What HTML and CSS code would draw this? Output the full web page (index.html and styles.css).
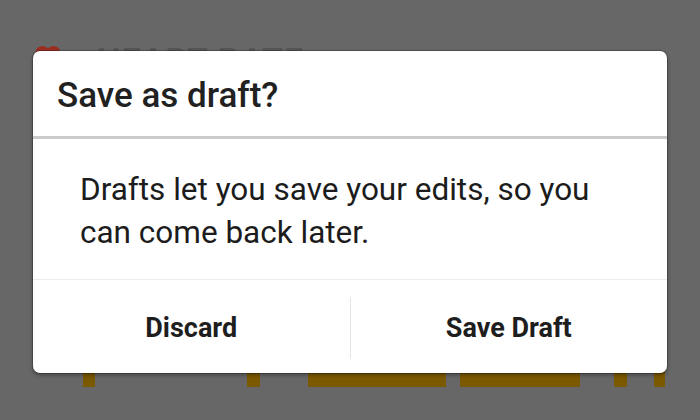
FILE: index.html
```html
<!DOCTYPE html>
<html lang="en">
<head>
    <meta charset="UTF-8">
    <title>Save as draft?</title>
    <link rel="stylesheet" href="styles.css">
</head>
<body>
    <div class="screen">
        <div class="page">
            <div class="page-head">
                <svg class="heart" width="30" height="28" viewBox="0 0 24 22"><path d="M12 21.4 10.5 20C5.4 15.4 2 12.3 2 8.5 2 5.4 4.4 3 7.5 3c1.7 0 3.4.8 4.5 2.1C13.1 3.8 14.8 3 16.5 3 19.6 3 22 5.4 22 8.5c0 3.8-3.4 6.9-8.5 11.5z" fill="#9a2e22"/></svg>
                <span class="page-title">HEART RATE</span>
            </div>
            <div class="page-stats">
                <span class="tick t1"></span>
                <span class="tick t2"></span>
                <span class="blob b1"></span>
                <span class="blob b2"></span>
                <span class="tick t3"></span>
                <span class="tick t4"></span>
            </div>
        </div>

        <div class="dialog">
            <div class="dialog-head">Save as draft?</div>
            <div class="dialog-body">Drafts let you save your edits, so you can come back later.</div>
            <div class="dialog-actions">
                <button class="action">Discard</button>
                <span class="sep"></span>
                <button class="action">Save Draft</button>
            </div>
        </div>
    </div>
</body>
</html>
```

FILE: styles.css
```css
body {
    margin: 0;
    background-color: #676767;
    font-family: Roboto, "Liberation Sans", sans-serif;
}
.screen {
    position: relative;
    width: 700px;
    height: 420px;
    overflow: hidden;
}
.page {
    display: flex;
    flex-direction: column;
    justify-content: space-between;
    height: 420px;
    padding: 40px 33px 33px;
    box-sizing: border-box;
}
.page-head {
    display: flex;
    align-items: flex-start;
    gap: 34px;
}
.heart {
    display: block;
    margin-top: 2px;
}
.page-title {
    font-size: 33px;
    font-weight: 700;
    line-height: 33px;
    color: #555;
    letter-spacing: 1.5px;
    margin-top: 4px;
}
.page-stats {
    display: flex;
    align-items: flex-start;
    height: 27px;
    padding-left: 50px;
}
.tick, .blob {
    display: block;
    background-color: #7b5900;
    height: 27px;
}
.t1 { width: 12px; }
.t2 { width: 13px; margin-left: 152px; }
.b1 { width: 138px; margin-left: 48px; }
.b2 { width: 120px; margin-left: 14px; }
.t3 { width: 13px; margin-left: 34px; }
.t4 { width: 11px; margin-left: 27px; }

.dialog {
    position: absolute;
    left: 33px;
    top: 51px;
    width: 634px;
    height: 322px;
    background-color: #fff;
    border-radius: 7px;
    box-shadow: 0 0 0 1px rgba(0, 0, 0, 0.2), 0 2px 4px rgba(0, 0, 0, 0.35);
    display: flex;
    flex-direction: column;
    color: #212121;
}
.dialog-head {
    height: 88px;
    box-sizing: border-box;
    padding: 27px 24px 0;
    font-size: 35px;
    font-weight: 500;
    line-height: 36px;
    border-bottom: 3px solid #cbcbcb;
}
.dialog-body {
    height: 141px;
    box-sizing: border-box;
    padding: 29px 50px 0 47px;
    font-size: 31.5px;
    line-height: 43px;
    color: #1c1c1c;
    border-bottom: 1px solid #ececec;
}
.dialog-actions {
    flex: 1;
    display: flex;
    align-items: center;
    padding-top: 3px;
}
.action {
    flex: 1;
    border: 0;
    background: none;
    font-family: inherit;
    font-size: 27px;
    font-weight: 700;
    color: #1e1e1e;
    padding: 0;
    height: 62px;
}
.sep {
    width: 1px;
    height: 62px;
    background-color: #e6e6e6;
}
```
